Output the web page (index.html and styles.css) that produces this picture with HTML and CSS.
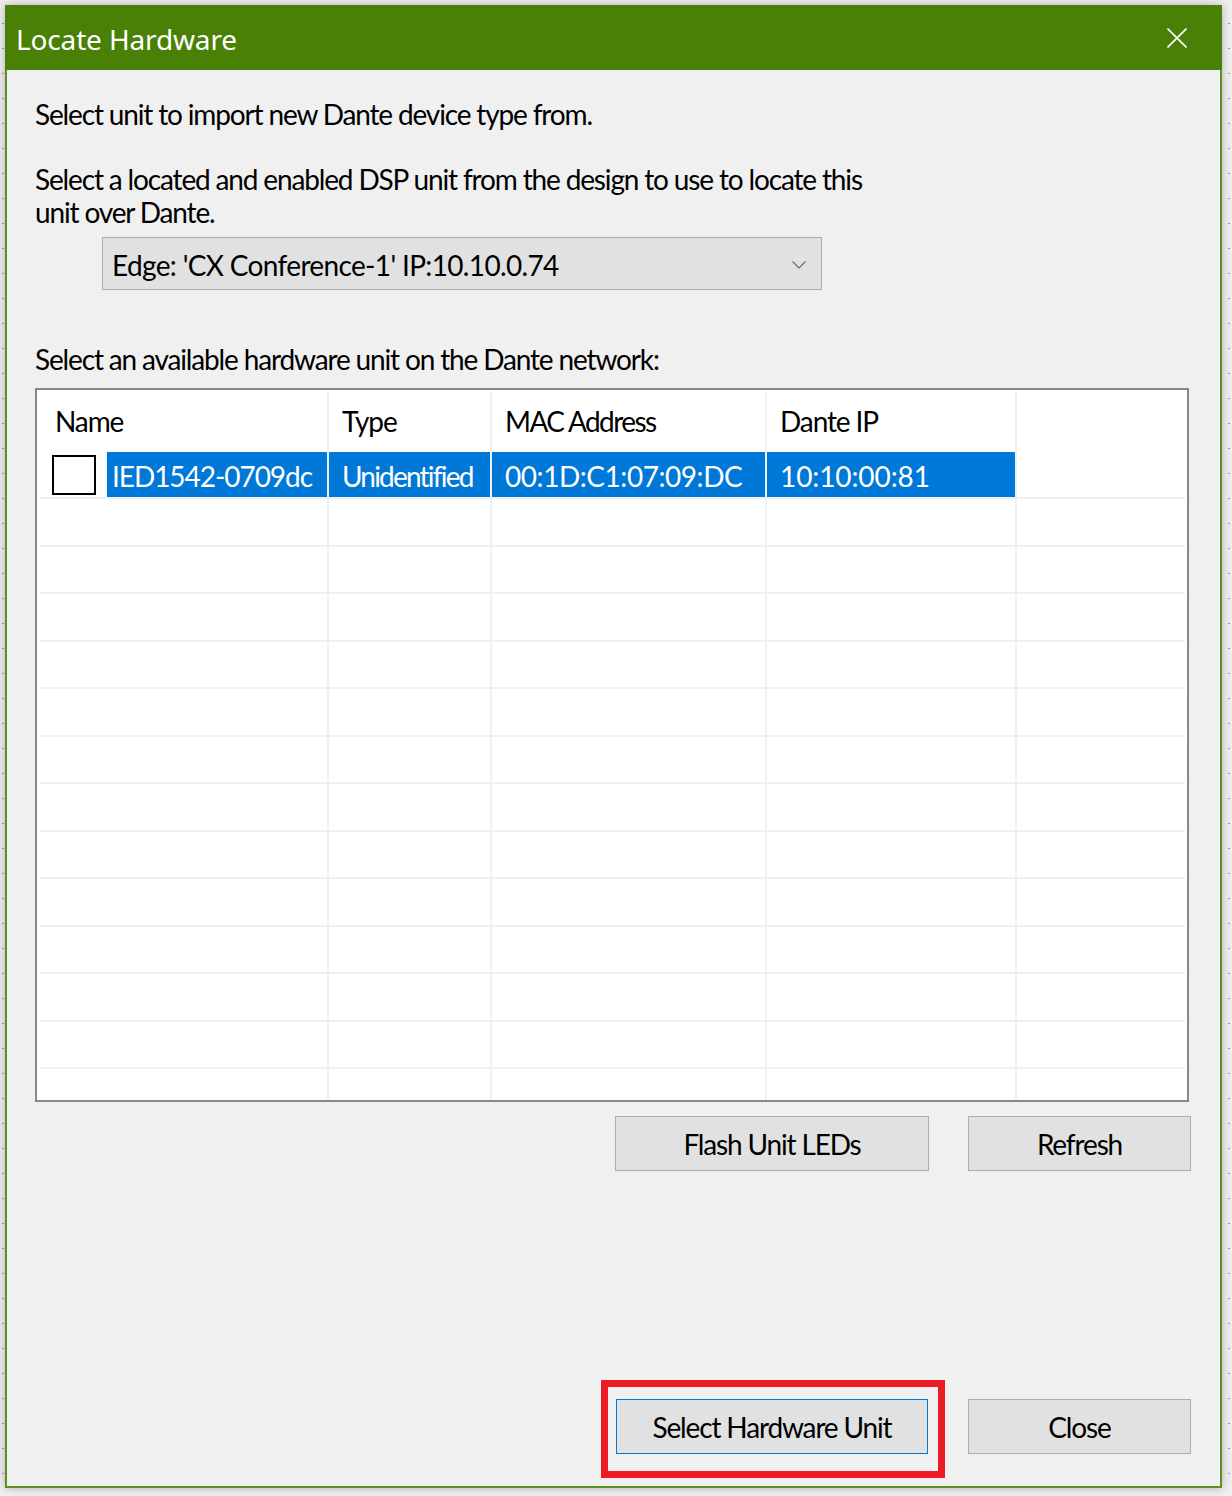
FILE: index.html
```html
<!DOCTYPE html>
<html>
<head>
<meta charset="utf-8">
<title>Locate Hardware</title>
<link rel="stylesheet" href="styles.css">
</head>
<body>
<div class="window">
  <div class="titlebar">
    <span class="title">Locate Hardware</span>
    <svg class="close" width="20" height="20" viewBox="0 0 20 20"><path d="M0.5 0.5 L19.5 19.5 M19.5 0.5 L0.5 19.5" stroke="#fff" stroke-width="1.6" fill="none"/></svg>
  </div>
  <div class="content">
    <p class="txt p1">Select unit to import new Dante device type from.</p>
    <p class="txt p2">Select a located and enabled DSP unit from the design to use to locate this<br>unit over Dante.</p>
    <div class="combo">
      <span class="combo-text">Edge: 'CX Conference-1' IP:10.10.0.74</span>
      <svg class="chev" width="14" height="8" viewBox="0 0 14 8"><path d="M0.5 0.5 L7 7 L13.5 0.5" stroke="#6d6d6d" stroke-width="1.2" fill="none"/></svg>
    </div>
    <p class="txt p3">Select an available hardware unit on the Dante network:</p>
    <div class="list">
      <div class="row head">
        <div class="cell c1"><span class="htext first">Name</span></div>
        <div class="cell c2"><span class="htext">Type</span></div>
        <div class="cell c3"><span class="htext mac">MAC Address</span></div>
        <div class="cell c4"><span class="htext">Dante IP</span></div>
        <div class="cell c5"></div>
      </div>
      <div class="row data">
        <div class="cell c1"><span class="check"></span><span class="sel">IED1542-0709dc</span></div>
        <div class="cell c2"><span class="sel">Unidentified</span></div>
        <div class="cell c3"><span class="sel wide">00:1D:C1:07:09:DC</span></div>
        <div class="cell c4"><span class="sel wide ip">10:10:00:81</span></div>
        <div class="cell c5"></div>
      </div>
      <div class="row"><div class="cell c1"></div><div class="cell c2"></div><div class="cell c3"></div><div class="cell c4"></div><div class="cell c5"></div></div>
      <div class="row"><div class="cell c1"></div><div class="cell c2"></div><div class="cell c3"></div><div class="cell c4"></div><div class="cell c5"></div></div>
      <div class="row"><div class="cell c1"></div><div class="cell c2"></div><div class="cell c3"></div><div class="cell c4"></div><div class="cell c5"></div></div>
      <div class="row"><div class="cell c1"></div><div class="cell c2"></div><div class="cell c3"></div><div class="cell c4"></div><div class="cell c5"></div></div>
      <div class="row"><div class="cell c1"></div><div class="cell c2"></div><div class="cell c3"></div><div class="cell c4"></div><div class="cell c5"></div></div>
      <div class="row"><div class="cell c1"></div><div class="cell c2"></div><div class="cell c3"></div><div class="cell c4"></div><div class="cell c5"></div></div>
      <div class="row"><div class="cell c1"></div><div class="cell c2"></div><div class="cell c3"></div><div class="cell c4"></div><div class="cell c5"></div></div>
      <div class="row"><div class="cell c1"></div><div class="cell c2"></div><div class="cell c3"></div><div class="cell c4"></div><div class="cell c5"></div></div>
      <div class="row"><div class="cell c1"></div><div class="cell c2"></div><div class="cell c3"></div><div class="cell c4"></div><div class="cell c5"></div></div>
      <div class="row"><div class="cell c1"></div><div class="cell c2"></div><div class="cell c3"></div><div class="cell c4"></div><div class="cell c5"></div></div>
      <div class="row"><div class="cell c1"></div><div class="cell c2"></div><div class="cell c3"></div><div class="cell c4"></div><div class="cell c5"></div></div>
      <div class="row"><div class="cell c1"></div><div class="cell c2"></div><div class="cell c3"></div><div class="cell c4"></div><div class="cell c5"></div></div>
      <div class="row"><div class="cell c1"></div><div class="cell c2"></div><div class="cell c3"></div><div class="cell c4"></div><div class="cell c5"></div></div>
      <div class="row"><div class="cell c1"></div><div class="cell c2"></div><div class="cell c3"></div><div class="cell c4"></div><div class="cell c5"></div></div>
    </div>
    <div class="btnrow top">
      <button class="btn b-flash">Flash Unit LEDs</button>
      <button class="btn b-refresh">Refresh</button>
    </div>
    <div class="btnrow bottom">
      <div class="highlight">
        <button class="btn b-select focused">Select Hardware Unit</button>
      </div>
      <button class="btn b-close">Close</button>
    </div>
  </div>
</div>
</body>
</html>
```

FILE: styles.css
```css
html, body {
  margin: 0;
  padding: 0;
}
body {
  width: 1232px;
  height: 1496px;
  overflow: hidden;
  background-color: #f0f0f0;
  background-image:
    repeating-linear-gradient(to bottom, transparent 0 23px, #9a9a9a 23px 24px, transparent 24px 25px),
    repeating-linear-gradient(to bottom, transparent 0 23px, #9a9a9a 23px 24px, transparent 24px 25px);
  background-size: 2px 100%, 2px 100%;
  background-position: 2px 0, 1228px 0;
  background-repeat: no-repeat;
  font-family: "Lato", "Noto Sans", sans-serif;
  color: #000;
}
.window {
  margin: 5px 0 0 5px;
  width: 1217px;
  height: 1483px;
  box-sizing: border-box;
  border: 2px solid #5a8f22;
  border-top: none;
  background: #f0f0f0;
  box-shadow: 0 0 9px rgba(0, 0, 0, 0.28);
  display: flex;
  flex-direction: column;
}
.titlebar {
  margin: 0 -2px;
  height: 65px;
  background: #4b8006;
  display: flex;
  align-items: center;
  padding-left: 11px;
  padding-right: 35px;
}
.title {
  font-family: "Noto Sans", sans-serif;
  font-size: 28px;
  letter-spacing: -0.15px;
  color: #fff;
  padding-top: 3px;
}
.close {
  margin-left: auto;
  display: block;
}
.content {
  flex: 1;
  display: flex;
  flex-direction: column;
  padding: 28px 29px 32px 28px;
}
.txt {
  margin: 0;
  font-size: 28px;
  line-height: 33px;
  letter-spacing: -1.15px;
}
.p2 {
  margin-top: 32px;
}
.combo {
  margin-top: 8px;
  margin-left: 67px;
  width: 720px;
  height: 53px;
  box-sizing: border-box;
  background: #e1e1e1;
  border: 1px solid #adadad;
  display: flex;
  align-items: center;
  padding: 2px 15px 0 9px;
}
.combo-text {
  font-size: 28px;
  letter-spacing: -0.65px;
}
.chev {
  margin-left: auto;
  display: block;
}
.p3 {
  margin-top: 53px;
}
.list {
  margin-top: 12px;
  width: 1154px;
  height: 714px;
  box-sizing: border-box;
  border: 2px solid #828790;
  background: #fff;
  padding: 2px 2px 4px 3px;
  overflow: hidden;
}
.row {
  display: flex;
  height: 47.5px;
  box-sizing: border-box;
  border-bottom: 2px solid #f0f0f0;
  flex: none;
}
.row.head {
  height: 60px;
  border-bottom: none;
}
.row.data {
  height: 47px;
}
.cell {
  box-sizing: border-box;
  border-right: 2px solid #f0f0f0;
  display: flex;
  align-items: stretch;
}
.c1 { width: 289px; }
.c2 { width: 163px; }
.c3 { width: 275px; }
.c4 { width: 250px; }
.c5 { flex: 1; border-right: none; }
.head .cell {
  align-items: center;
}
.htext {
  font-size: 28px;
  letter-spacing: -1.1px;
  padding-left: 13px;
  padding-bottom: 2px;
}
.htext.first {
  padding-left: 15px;
}
.htext.mac {
  letter-spacing: -1.6px;
}
.check {
  flex: none;
  align-self: center;
  width: 44px;
  height: 40px;
  box-sizing: border-box;
  border: 2px solid #000;
  background: #fff;
  margin-left: 12px;
  margin-right: 11px;
}
.sel {
  flex: 1;
  background: #0078d7;
  color: #fff;
  font-size: 28px;
  letter-spacing: -1.05px;
  display: flex;
  align-items: center;
  padding: 3px 0 0 5px;
}
.c2 .sel { padding-left: 13px; letter-spacing: -1.8px; }
.sel.wide { padding-left: 13px; letter-spacing: -0.45px; }
.sel.wide.ip { letter-spacing: -0.1px; }
.btnrow {
  display: flex;
  justify-content: flex-end;
  gap: 40px;
}
.btnrow.top {
  margin-top: 14px;
  gap: 39px;
}
.btnrow.bottom {
  margin-top: auto;
}
.btn {
  height: 55px;
  box-sizing: border-box;
  background: #e1e1e1;
  border: 1px solid #adadad;
  font-family: "Lato", "Noto Sans", sans-serif;
  font-size: 28px;
  letter-spacing: -1.15px;
  color: #000;
  padding: 1px 0 0;
  margin: 0;
}
.b-flash { width: 314px; }
.b-refresh { width: 223px; }
.b-select { width: 312px; display: block; }
.b-close { width: 223px; }
.btn.focused {
  border-color: #0078d7;
}
.highlight {
  position: relative;
}
.highlight::after {
  content: "";
  position: absolute;
  left: -15px;
  top: -19px;
  right: -17px;
  bottom: -24px;
  border: 7px solid #ed1c24;
  pointer-events: none;
}
```
